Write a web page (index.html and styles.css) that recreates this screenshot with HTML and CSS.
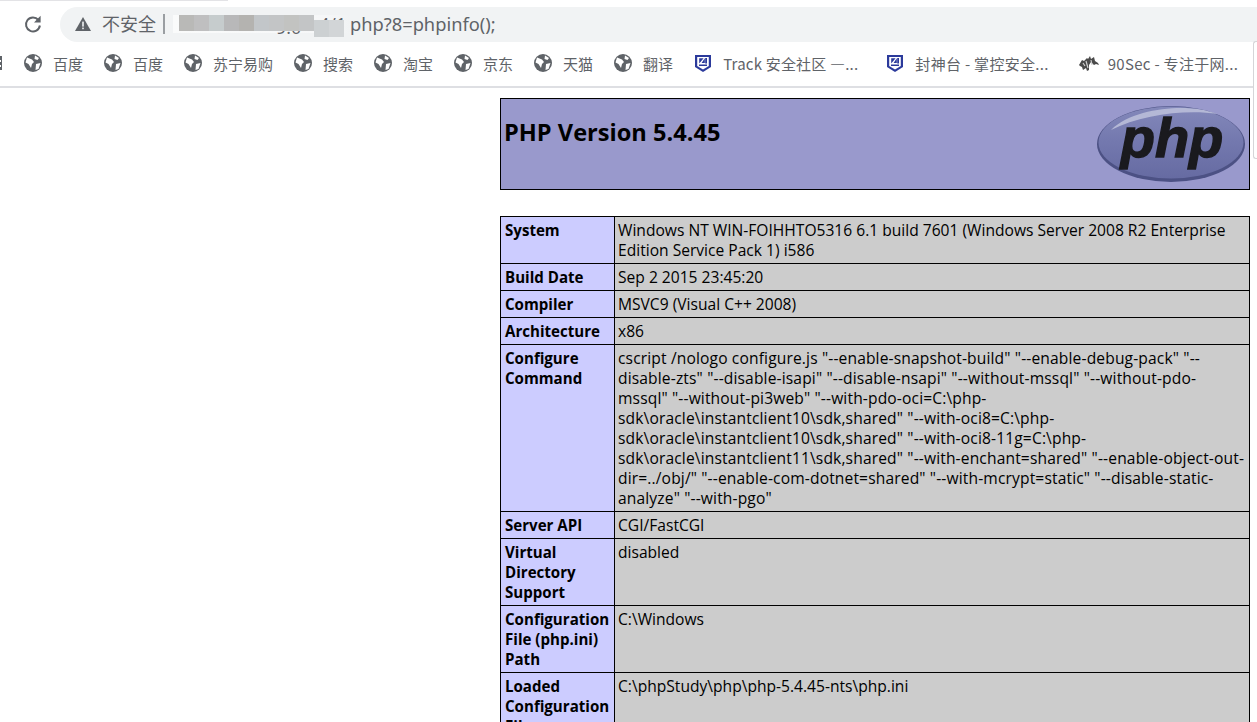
FILE: index.html
```html
<!DOCTYPE html>
<html lang="zh">
<head>
<meta charset="utf-8">
<title>phpinfo()</title>
<link rel="stylesheet" href="styles.css">
</head>
<body>
<div class="chrome">
  <div class="topline"></div>
  <div class="toolbar">
    <button class="reload" aria-label="reload">
      <svg width="20" height="20" viewBox="0 0 20 20"><path d="M15.4 6A7 7 0 1 0 16.9 11.5" fill="none" stroke="#5f6368" stroke-width="2"/><path d="M17.6 1.8v6.6H11z" fill="#5f6368"/></svg>
    </button>
    <div class="omnibox">
      <svg class="warn" width="16" height="16" viewBox="0 0 16 16"><path d="M8 1 16 15H0z" fill="#5f6368"/><rect x="7.2" y="5.6" width="1.6" height="5" fill="#f1f3f4"/><rect x="7.2" y="11.6" width="1.6" height="1.6" fill="#f1f3f4"/></svg>
      <span class="insecure">不安全</span>
      <span class="sep"></span>
      <span class="url"><span class="blur"><span class="peek peek-a">9.0</span><span class="peek peek-b">4/1</span><i class="b1"></i><i class="b2"></i><i class="b3"></i><i class="b4"></i><i class="b5"></i><i class="b6"></i><i class="b7"></i><i class="b8"></i><i class="b7"></i><i class="b9 low"></i><i class="b10 low"></i></span><span class="url-tail">php?8=phpinfo();</span></span>
    </div>
  </div>
  <div class="bookmarks">
    <svg class="frag" width="2" height="14" viewBox="0 0 2 14"><path d="M0 0h2v14H0zM0 4h1v2H0zM0 9h1v2H0z" fill="#5f6368" fill-rule="evenodd"/></svg>
    <span class="bm"><svg class="globe" viewBox="0 0 18 18"><use href="#g"/></svg><span>百度</span></span>
    <span class="bm"><svg class="globe" viewBox="0 0 18 18"><use href="#g"/></svg><span>百度</span></span>
    <span class="bm"><svg class="globe" viewBox="0 0 18 18"><use href="#g"/></svg><span>苏宁易购</span></span>
    <span class="bm"><svg class="globe" viewBox="0 0 18 18"><use href="#g"/></svg><span>搜索</span></span>
    <span class="bm"><svg class="globe" viewBox="0 0 18 18"><use href="#g"/></svg><span>淘宝</span></span>
    <span class="bm"><svg class="globe" viewBox="0 0 18 18"><use href="#g"/></svg><span>京东</span></span>
    <span class="bm"><svg class="globe" viewBox="0 0 18 18"><use href="#g"/></svg><span>天猫</span></span>
    <span class="bm"><svg class="globe" viewBox="0 0 18 18"><use href="#g"/></svg><span>翻译</span></span>
    <span class="bm w-track"><svg class="shield" viewBox="0 0 16 17"><use href="#s"/></svg><span>Track 安全社区 —...</span></span>
    <span class="bm w-feng"><svg class="shield" viewBox="0 0 16 17"><use href="#s"/></svg><span>封神台 - 掌控安全...</span></span>
    <span class="bm w-sec"><svg class="sec" viewBox="0 0 20 16"><path d="M0 10 3 5l2 1 3-3 1 1 2-3 1 3 3-2 1 4 3 2 1 2-3-1-2 1-3-3-2 3 0 5-2 1-1-3-3 2-1-3-2-1z" fill="#4a4a4a"/><path d="M7 6l2 7M12 5l1 5M4 8l2 3" stroke="#cfcfcf" stroke-width="1.2"/></svg><span>90Sec - 专注于网...</span></span>
  </div>
</div>
<svg class="defs" width="0" height="0">
  <defs>
    <g id="g"><circle cx="9" cy="9" r="9" fill="#5f6368"/><path d="M3 3.5 8 5.5 10 8 8 10 7 14 4.5 10 1.5 8.5zM11 1.5l4 2.5-1.5 2-3-1zM12 10l4.5-1-2 6-3 1z" fill="#fff"/></g>
    <g id="s"><path d="M0 0h16v12l-8 5-8-5z" fill="#2b3a9b"/><path d="M2.2 2h11.6v9l-5.8 3.6L2.2 11z" fill="#fff"/><path d="M4 9.4h8v1.7H4zM4.2 3.2h4.4L4.2 8.6zM10.2 3H12v5.4h-1.8zM9.8 3.2 6.6 8h3.2z" fill="#2b3a9b"/></g>
  </defs>
</svg>
<main class="page">
  <div class="center">
    <div class="head">
      <h1>PHP Version 5.4.45</h1>
      <svg class="logo" width="148" height="76" viewBox="0 0 148 76">
        <defs>
          <linearGradient id="lg" x1="0" y1="0" x2="0" y2="1"><stop offset="0" stop-color="#8388ba"/><stop offset=".5" stop-color="#7378ae"/><stop offset="1" stop-color="#666ba2"/></linearGradient>
        </defs>
        <ellipse cx="74" cy="38" rx="74" ry="38" fill="#4c5184"/>
        <ellipse cx="74" cy="36.5" rx="72.5" ry="36" fill="url(#lg)"/>
        <path d="M14 24C30 8 60 2 84 2c14 0 26 2 36 6C92 3 44 8 14 24z" fill="#b4b8d6"/>
        <text x="75" y="51" class="logo-text">php</text>
      </svg>
    </div>
    <table class="info">
      <tr><th>System</th><td>Windows NT WIN-FOIHHTO5316 6.1 build 7601 (Windows Server 2008 R2 Enterprise Edition Service Pack 1) i586</td></tr>
      <tr><th>Build Date</th><td>Sep 2 2015 23:45:20</td></tr>
      <tr><th>Compiler</th><td>MSVC9 (Visual C++ 2008)</td></tr>
      <tr><th>Architecture</th><td>x86</td></tr>
      <tr><th>Configure Command</th><td class="cmd">cscript /nologo configure.js "--enable-snapshot-build" "--enable-debug-pack" "--disable-zts" "--disable-isapi" "--disable-nsapi" "--without-mssql" "--without-pdo-mssql" "--without-pi3web" "--with-pdo-oci=C:\php-sdk\oracle\instantclient10\sdk,shared" "--with-oci8=C:\php-sdk\oracle\instantclient10\sdk,shared" "--with-oci8-11g=C:\php-sdk\oracle\instantclient11\sdk,shared" "--with-enchant=shared" "--enable-object-out-dir=../obj/" "--enable-com-dotnet=shared" "--with-mcrypt=static" "--disable-static-analyze" "--with-pgo"</td></tr>
      <tr><th>Server API</th><td>CGI/FastCGI</td></tr>
      <tr><th>Virtual Directory Support</th><td>disabled</td></tr>
      <tr><th>Configuration File (php.ini) Path</th><td>C:\Windows</td></tr>
      <tr><th>Loaded Configuration File</th><td>C:\phpStudy\php\php-5.4.45-nts\php.ini</td></tr>
    </table>
  </div>
</main>
<div class="edge"></div>
</body>
</html>
```
FILE: styles.css
```css
html, body { margin: 0; height: 722px; overflow: hidden; background: #fff; }
body { font-family: "Open Sans", "Noto Sans CJK SC", sans-serif; color: #000; position: relative; }
.chrome { height: 86px; border-bottom: 2px solid #dedfe3; background: #fff; overflow: hidden; }
.topline { width: 228px; height: 1px; background: #e3e3e6; }
.toolbar { height: 47px; display: flex; align-items: center; padding: 0 0 0 23px; box-sizing: border-box; }
.reload { width: 20px; height: 20px; padding: 0; border: 0; background: none; margin: 0 17px 2px 0; }
.omnibox { flex: 1; height: 35px; background: #f1f3f4; border-radius: 18px 0 0 18px; display: flex; align-items: center; padding-left: 15px; color: #5f6368; font-size: 16px; margin-bottom: 1px; }
.warn { margin-right: 11px; flex: none; }
.insecure { font-family: "Noto Sans CJK SC", sans-serif; font-size: 18px; margin-bottom: 2px; }
.sep { width: 2px; height: 20px; background: #9a9ea2; margin: 0 8px 0 7px; }
.url { display: flex; align-items: center; }
.blur { display: flex; width: 171px; height: 18px; padding-left: 6px; position: relative; background: linear-gradient(to right, #fafbfb, #f6f7f8 85%, #f1f3f4); }
.blur i { width: 15px; height: 16px; flex: none; position: relative; }
.blur .low { height: 17px; margin-top: 5px; }
.b1 { background: #b9b9b7; } .b2 { background: #bfbfc0; } .b3 { background: #c6cccd; }
.b4 { background: #b8b8b9; } .b5 { background: #b4b3b0; } .b6 { background: #c2c6c9; }
.b7 { background: #c3c5c6; } .b8 { background: #c2c3c1; } .b9 { background: #ccd0d2; } .b10 { background: #d2d5d7; }
.peek { position: absolute; font-size: 18px; line-height: 20px; color: #5f6368; white-space: nowrap; }
.peek-a { left: 103px; top: 2px; }
.peek-b { left: 146px; top: -1px; }
.url-tail { font-family: "Noto Sans", sans-serif; font-size: 18.3px; color: #5f6368; margin-bottom: 2px; }
.bookmarks { height: 39px; display: flex; align-items: center; padding-bottom: 9px; box-sizing: border-box; font-family: "Noto Sans CJK SC", sans-serif; font-size: 15px; color: #5f6368; white-space: nowrap; }
.frag { flex: none; margin-right: 22px; }
.bm { display: flex; align-items: center; gap: 11px; margin-right: 21px; }
.globe { width: 18px; height: 18px; flex: none; }
.shield { width: 16px; height: 17px; flex: none; }
.sec { width: 20px; height: 16px; flex: none; }
.w-track { gap: 12px; margin-left: 1px; margin-right: 29px; }
.w-track span { letter-spacing: .2px; }
.w-feng span { letter-spacing: .3px; }
.w-feng { gap: 12px; margin-right: 30px; }
.w-sec { gap: 9px; margin-right: 0; }
.w-sec span { letter-spacing: .3px; }
.defs { position: absolute; }
.page { display: flex; justify-content: flex-end; padding: 10px 7px 0 0; }
.center { width: 750px; }
.head { height: 92px; box-sizing: border-box; background: #9999cc; border: 1px solid #000; display: flex; justify-content: space-between; padding: 7px 4px 0 3px; margin-bottom: 26px; }
h1 { margin: -4px 0 0; font-size: 23.6px; line-height: 60px; height: 60px; font-weight: 700; font-family: "Open Sans", sans-serif; }
.logo { flex: none; overflow: visible; }
.logo-text { font-family: "Liberation Sans", sans-serif; font-size: 56px; font-weight: 700; font-style: italic; text-anchor: middle; fill: #1a1a1e; stroke: #1a1a1e; stroke-width: 1.4; }
.info { width: 750px; border-collapse: collapse; font-size: 15.6px; line-height: 20px; table-layout: fixed; font-family: "Open Sans", sans-serif; }
th, td { border: 1px solid #000; padding: 3px 4px; vertical-align: top; text-align: left; }
th { width: 105px; box-sizing: content-box; background: #ccccff; font-weight: 700; font-size: 15.1px; }
td { background: #cccccc; padding-left: 3px; }
.cmd { letter-spacing: .135px; }
.edge { position: absolute; top: 41px; right: 0; width: 4px; height: 118px; background: #fff; border: 1px solid #d5d5d8; border-right: 0; border-radius: 3px 0 0 3px; box-sizing: border-box; }
```
